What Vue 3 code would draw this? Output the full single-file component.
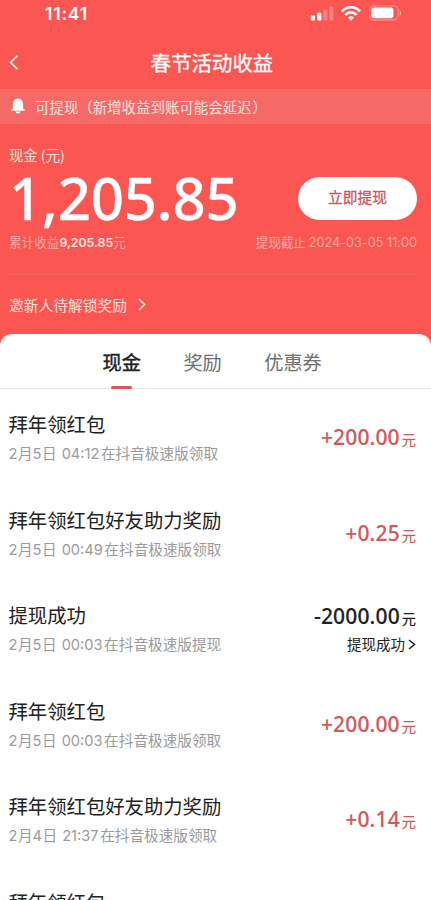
<script setup>
import { ref } from 'vue'

const tabs = ['现金', '奖励', '优惠券']
const active = ref(0)

const records = [
  { title: '拜年领红包', day: ['2', '5'], time: '04:12', note: '在抖音极速版领取', amount: '+200.00' },
  { title: '拜年领红包好友助力奖励', day: ['2', '5'], time: '00:49', note: '在抖音极速版领取', amount: '+0.25' },
  { title: '提现成功', day: ['2', '5'], time: '00:03', note: '在抖音极速版提现', amount: '-2000.00', status: '提现成功' },
  { title: '拜年领红包', day: ['2', '5'], time: '00:03', note: '在抖音极速版领取', amount: '+200.00' },
  { title: '拜年领红包好友助力奖励', day: ['2', '4'], time: '21:37', note: '在抖音极速版领取', amount: '+0.14' },
  { title: '拜年领红包' }
]
</script>

<template>
  <div class="page">
    <div class="status">
      <span class="clock">11:41</span>
      <div class="indicators">
        <svg class="signal" width="24" height="16" viewBox="0 0 24 16" fill="#fff">
          <rect x="0.8" y="10.2" width="4.2" height="5.2" rx="1" />
          <rect x="7.2" y="7.8" width="4.2" height="7.6" rx="1" />
          <rect x="13.4" y="4.6" width="4" height="10.8" rx="1" opacity=".25" />
          <rect x="19.4" y="1.6" width="4" height="13.8" rx="1" opacity=".25" />
        </svg>
        <svg class="wifi" width="20" height="15" viewBox="0 0 20 15" fill="none" stroke="#fff" stroke-width="2.7">
          <path d="M1 5.3C6-.1 14-.1 19 5.3" />
          <path d="M4.300 8.900C7.700 5.400 12.300 5.400 15.700 8.900" />
          <path d="M6.900 11.500Q10 8.900 13.100 11.500L10 14.800Z" fill="#fff" stroke="none" />
        </svg>
        <svg class="battery" width="33" height="16" viewBox="0 0 33 16">
          <rect x="0.6" y="0.8" width="28.6" height="14.2" rx="4.4" fill="none" stroke="#fff" stroke-opacity=".45" />
          <rect x="2.4" y="2.6" width="22" height="10.6" rx="2.6" fill="#fff" />
          <path d="M30.8 5.6c2 .7 2 4 0 4.8z" fill="#fff" opacity=".5" />
        </svg>
      </div>
    </div>

    <header class="nav">
      <svg class="back" width="10" height="15" viewBox="0 0 10 15" fill="none" stroke="#fff" stroke-width="1.6">
        <path d="M8.500 .8L1.500 7.400L8.500 14.100" />
      </svg>
      <h1>春节活动收益</h1>
    </header>

    <div class="notice">
      <svg width="16" height="16" viewBox="0 0 16 16" fill="#fff">
        <path d="M8 .5C10.900.9 13.100 3 13.100 6v4.200l1.600 1.500c.4.5.1 1-.5 1H1.800c-.6 0-.9-.5-.5-1l1.600-1.500V6C2.900 3 5.100.9 8 .5z" />
        <path d="M5.300 13.500h5.400c-.5 1.300-1.400 1.900-2.700 1.900s-2.200-.6-2.700-1.900z" />
      </svg>
      <span>可提现（新增收益到账可能会延迟<span class="close">）</span></span>
    </div>

    <section class="balance">
      <div class="label">现金 (元)</div>
      <div class="main">
        <div class="total">1,205.85</div>
        <button class="withdraw">立即提现</button>
      </div>
      <div class="detail">
        <span class="sum">累计收益<b>9,205.85</b>元</span>
        <span class="deadline">提现截止 <i>2024-03-05 11:00</i></span>
      </div>
      <div class="invite">
        <span>邀新人待解锁奖励</span>
        <svg width="8" height="13" viewBox="0 0 8 13" fill="none" stroke="#fff" stroke-opacity=".9" stroke-width="1.5">
          <path d="M1 1L6.600 6.500L1 12" />
        </svg>
      </div>
    </section>

    <main class="sheet">
      <nav class="tabs">
        <span v-for="(tab, i) in tabs" :key="tab" class="tab" :class="{ active: active === i }" @click="active = i">{{ tab }}</span>
      </nav>
      <div v-for="(r, i) in records" :key="i" class="row">
        <div class="info">
          <div class="title">{{ r.title }}</div>
          <div v-if="r.time" class="meta"><i>{{ r.day[0] }}</i>月<i>{{ r.day[1] }}</i>日<i class="time">{{ r.time }}</i><span class="note">{{ r.note }}</span></div>
        </div>
        <div v-if="r.amount" class="value" :class="{ out: r.status }">
          <div class="amount"><span class="num">{{ r.amount }}</span><span class="unit">元</span></div>
          <div v-if="r.status" class="state">
            {{ r.status }}
            <svg width="8" height="11" viewBox="0 0 8 11" fill="none" stroke="#222" stroke-width="1.500">
              <path d="M1 1L6.500 5.500L1 10" />
            </svg>
          </div>
        </div>
      </div>
    </main>
  </div>
</template>

<style>
body {
  background: #fff;
}
</style>

<style scoped>
* {
  box-sizing: border-box;
}
.page {
  height: 900px;
  overflow: hidden;
  display: flex;
  flex-direction: column;
  background: #fb5652;
  color: #fff;
  font-family: "Noto Sans CJK SC", sans-serif;
  white-space: nowrap;
}
i {
  font-style: normal;
  font-family: Inter, sans-serif;
}
.status {
  flex: none;
  height: 36px;
  padding: 0 29px 8px 45px;
  display: flex;
  align-items: center;
  justify-content: space-between;
}
.clock {
  font: 600 17.500px/28px Inter, sans-serif;
  letter-spacing: 0.800px;
}
.indicators {
  display: flex;
  align-items: center;
  padding-bottom: 2px;
}
.signal {
  margin-right: 7px;
}
.wifi {
  margin-right: 8px;
}
.nav {
  flex: none;
  height: 53px;
  padding-left: 9px;
  display: grid;
  grid-template-columns: 10px 1fr 19px;
  align-items: center;
}
h1 {
  margin: 0;
  padding: 0 7px 2px 0;
  text-align: center;
  font-size: 20.400px;
  font-weight: 400;
  line-height: 30px;
  -webkit-text-stroke: 0.300px currentColor;
}
.notice {
  flex: none;
  height: 35px;
  padding: 0 0 1px 10px;
  display: flex;
  align-items: center;
  gap: 9px;
  background: #f56a67;
  color: #ffe3e0;
  font-size: 14.450px;
}
.close {
  margin-left: 1px;
}
.balance {
  flex: none;
  height: 210px;
  padding: 20px 14px 0 9px;
}
.label {
  height: 21px;
  font-size: 14.300px;
  line-height: 21px;
  color: #ffe0dd;
}
.main {
  height: 66px;
  display: flex;
  align-items: center;
  justify-content: space-between;
}
.total {
  font-family: "Noto Sans", sans-serif;
  font-weight: 500;
  font-size: 58px;
  line-height: 65px;
  height: 66px;
  letter-spacing: -0.150px;
  -webkit-text-stroke: 0.300px currentColor;
}
.withdraw {
  width: 119px;
  height: 43px;
  padding: 0 0 3px;
  border: 0;
  border-radius: 22px;
  background: #fff;
  color: #cc5558;
  font: 400 14.700px "Noto Sans CJK SC", sans-serif;
  -webkit-text-stroke: 0.300px currentColor;
}
.detail {
  display: flex;
  justify-content: space-between;
  height: 44px;
  padding-top: 1px;
  border-bottom: 1px solid #f9645f;
  font-size: 12.600px;
  line-height: 20px;
  color: #ffaaa4;
}
.detail b {
  font: 600 12.300px Inter, sans-serif;
  color: #ffe6e2;
}
.deadline i {
  letter-spacing: 0.050px;
}
.invite {
  height: 58px;
  display: flex;
  align-items: center;
  gap: 11px;
  font-size: 14.750px;
  color: #ffe0dd;
}
.sheet {
  flex: 1;
  min-height: 0;
  overflow: hidden;
  border-radius: 12px 12px 0 0;
  background: #fff;
  color: #222;
}
.tabs {
  height: 55px;
  padding-left: 102.500px;
  display: flex;
  gap: 42.500px;
  border-bottom: 1px solid #e9e9e9;
  font-size: 19.200px;
  line-height: 56px;
  color: #707070;
}
.tab {
  position: relative;
}
.tab.active {
  color: #222;
  -webkit-text-stroke: 0.450px currentColor;
}
.tab.active::after {
  content: "";
  position: absolute;
  left: 50%;
  bottom: -1px;
  width: 21px;
  height: 3px;
  margin-left: -10.500px;
  border-radius: 1.500px;
  background: #d2595e;
}
.row {
  height: 95.500px;
  padding: 21px 15px 0 8.500px;
  display: flex;
  justify-content: space-between;
}
.title {
  font-size: 19.350px;
  line-height: 28px;
}
.meta {
  margin-top: 3px;
  font-size: 14.650px;
  line-height: 24px;
  color: #9b9b9b;
}
.meta i {
  margin-right: 0.500px;
}
.meta .time {
  margin: 0 1.500px 0 5px;
}
.value {
  padding-top: 12px;
  display: flex;
  flex-direction: column;
  align-items: flex-end;
  color: #d2595c;
}
.value.out {
  padding-top: 0;
  color: #222;
}
.amount {
  display: flex;
  align-items: baseline;
  gap: 2px;
  line-height: 30px;
}
.num {
  font-family: "Noto Sans", sans-serif;
  font-weight: 500;
  font-size: 21px;
  letter-spacing: 0.150px;
  -webkit-text-stroke: 0.150px currentColor;
}
.unit {
  font-size: 14.200px;
  -webkit-text-stroke: 0.200px currentColor;
}
.state {
  margin-top: -3px;
  display: flex;
  align-items: center;
  gap: 3px;
  font-size: 14.500px;
  line-height: 28px;
}
</style>
